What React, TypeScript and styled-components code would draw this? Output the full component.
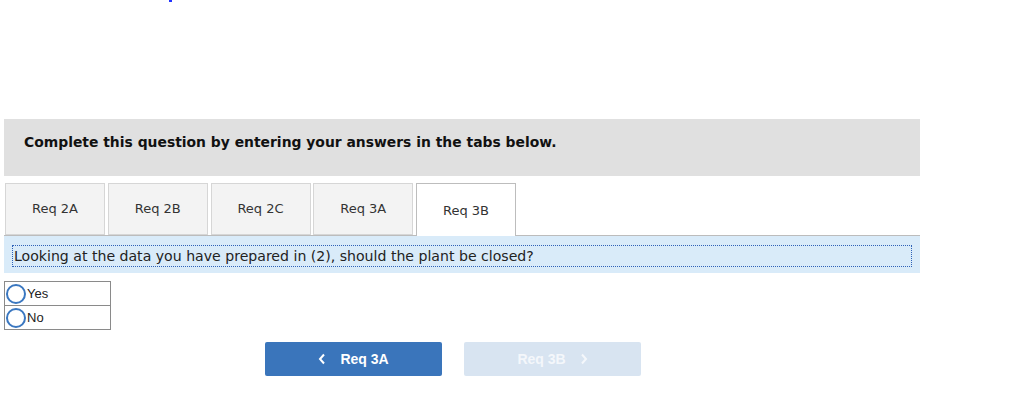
import React from 'react';
import styled, { createGlobalStyle } from 'styled-components';

const GlobalStyle = createGlobalStyle`
  html, body {
    margin: 0;
    padding: 0;
    background: #ffffff;
  }
  body {
    font-family: "DejaVu Sans", Verdana, sans-serif;
    color: #222;
  }
`;

const Page = styled.div`
  width: 1024px;
  height: 406px;
  overflow: hidden;
`;

const TopArea = styled.div`
  height: 119px;
  position: relative;
`;

const Dot = styled.span`
  position: absolute;
  left: 169px;
  top: 0;
  width: 3px;
  height: 2px;
  background: #2233ff;
`;

const Header = styled.div`
  margin-left: 4px;
  width: 896px;
  height: 57px;
  box-sizing: content-box;
  padding-left: 20px;
  background: #e0e0e0;
  font-weight: bold;
  font-size: 13.9px;
  line-height: 20px;
  display: flex;
  align-items: flex-start;
  color: #111;

  span {
    margin-top: 13px;
  }
`;

const TabRow = styled.div`
  display: flex;
  margin-top: 7px;
  padding-left: 5px;
  gap: 2.75px;
  height: 52px;
  position: relative;
  z-index: 1;
`;

const Tab = styled.div<{ $active?: boolean }>`
  box-sizing: border-box;
  width: 100px;
  height: ${({ $active }) => ($active ? '53px' : '52px')};
  padding-bottom: ${({ $active }) => ($active ? '0' : '1px')};
  background: ${({ $active }) => ($active ? '#ffffff' : '#f3f3f3')};
  border: 1px solid ${({ $active }) => ($active ? '#bdbdbd' : '#d6d6d6')};
  border-bottom: ${({ $active }) => ($active ? 'none' : '1px solid #d6d6d6')};
  display: flex;
  align-items: center;
  justify-content: center;
  font-size: 13px;
  color: #333;
`;

const Strip = styled.div`
  margin-left: 4px;
  width: 916px;
  height: 38px;
  box-sizing: border-box;
  background: #d9ebf9;
  border-top: 1px solid #bcbcbc;
  padding-top: 9px;
`;

const Prompt = styled.div`
  margin-left: 8px;
  width: 897px;
  height: 20px;
  border: 1px dotted #2f62b8;
  display: flex;
  align-items: center;
  padding-left: 1px;
  font-size: 14.1px;
  color: #222;
`;

const Choices = styled.div`
  margin-top: 8px;
  margin-left: 4px;
  width: 107px;
  border: 1px solid #8a8a8a;
  box-sizing: border-box;
`;

const Choice = styled.label<{ $last?: boolean }>`
  display: flex;
  align-items: center;
  height: 23px;
  border-bottom: ${({ $last }) => ($last ? 'none' : '1px solid #8a8a8a')};
  font-family: "Liberation Sans", Arial, sans-serif;
  font-size: 13px;
  color: #222;
`;

const Radio = styled.span`
  box-sizing: border-box;
  width: 20px;
  height: 20px;
  border-radius: 50%;
  border: 2.5px solid #3a77c0;
  margin-left: 1px;
  margin-right: 1px;
`;

const Nav = styled.div`
  display: flex;
  gap: 22px;
  margin-top: 12px;
  padding-left: 265px;
`;

const NavButton = styled.button<{ $disabled?: boolean }>`
  width: 177px;
  height: 34px;
  border: none;
  border-radius: 2px;
  background: ${({ $disabled }) => ($disabled ? '#d8e4f1' : '#3a75bb')};
  color: ${({ $disabled }) => ($disabled ? '#f4f7fb' : '#ffffff')};
  font-family: "Liberation Sans", Arial, sans-serif;
  font-weight: bold;
  font-size: 14px;
  display: flex;
  align-items: center;
  justify-content: center;
  gap: 14px;
  padding: 0;
`;

const Chevron = ({ dir }: { dir: 'left' | 'right' }) => (
  <svg width="8" height="12" viewBox="0 0 8 12">
    <path
      d={dir === 'left' ? 'M6 1.5 L2 6 L6 10.5' : 'M2 1.5 L6 6 L2 10.5'}
      fill="none"
      stroke="currentColor"
      strokeWidth="2"
    />
  </svg>
);

const tabs = ['Req 2A', 'Req 2B', 'Req 2C', 'Req 3A', 'Req 3B'];

export default function App() {
  return (
    <Page>
      <GlobalStyle />
      <TopArea>
        <Dot />
      </TopArea>
      <Header>
        <span>Complete this question by entering your answers in the tabs below.</span>
      </Header>
      <TabRow>
        {tabs.map((t) => (
          <Tab key={t} $active={t === 'Req 3B'}>
            {t}
          </Tab>
        ))}
      </TabRow>
      <Strip>
        <Prompt>Looking at the data you have prepared in (2), should the plant be closed?</Prompt>
      </Strip>
      <Choices>
        <Choice>
          <Radio />
          Yes
        </Choice>
        <Choice $last>
          <Radio />
          No
        </Choice>
      </Choices>
      <Nav>
        <NavButton>
          <Chevron dir="left" />
          Req 3A
        </NavButton>
        <NavButton $disabled>
          Req 3B
          <Chevron dir="right" />
        </NavButton>
      </Nav>
    </Page>
  );
}
